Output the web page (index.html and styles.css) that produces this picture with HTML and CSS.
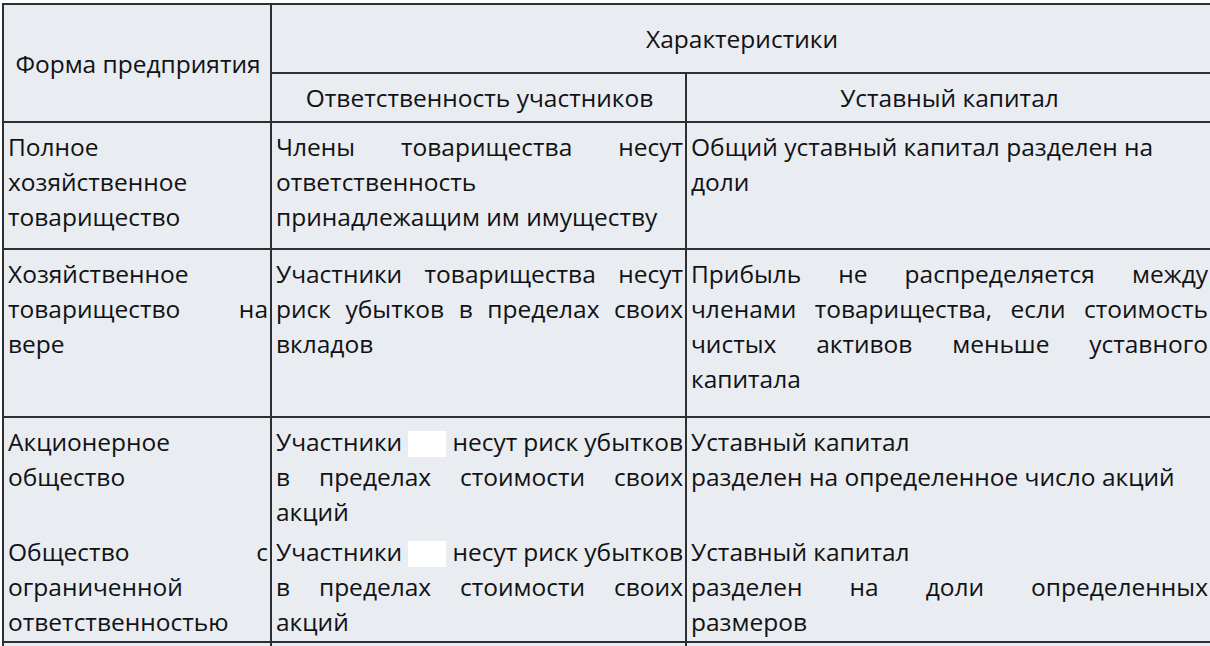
FILE: index.html
```html
<!DOCTYPE html>
<html lang="ru">
<head>
<meta charset="utf-8">
<title>Формы предприятий</title>
<link rel="stylesheet" href="styles.css">
</head>
<body>
<table class="grid">
  <colgroup>
    <col class="col-form">
    <col class="col-resp">
    <col class="col-cap">
  </colgroup>
  <thead>
    <tr class="h-top">
      <th rowspan="2" class="head-form">Форма предприятия</th>
      <th colspan="2" class="head">Характеристики</th>
    </tr>
    <tr class="h-sub">
      <th class="head">Ответственность участников</th>
      <th class="head">Уставный капитал</th>
    </tr>
  </thead>
  <tbody>
    <tr class="r1">
      <td><span class="ln">Полное</span><span class="ln">хозяйственное</span><span class="ln">товарищество</span></td>
      <td><span class="ln j">Члены товарищества несут</span><span class="ln">ответственность</span><span class="ln">принадлежащим им имуществу</span></td>
      <td><span class="ln">Общий уставный капитал разделен на</span><span class="ln">доли</span></td>
    </tr>
    <tr class="r2">
      <td><span class="ln">Хозяйственное</span><span class="ln j">товарищество на</span><span class="ln">вере</span></td>
      <td><span class="ln j">Участники товарищества несут</span><span class="ln j">риск убытков в пределах своих</span><span class="ln">вкладов</span></td>
      <td><span class="ln j">Прибыль не распределяется между</span><span class="ln j">членами товарищества, если стоимость</span><span class="ln j">чистых активов меньше уставного</span><span class="ln">капитала</span></td>
    </tr>
    <tr class="r3">
      <td><span class="ln">Акционерное</span><span class="ln">общество</span></td>
      <td><span class="ln j tight">Участники <span class="blank"></span> несут риск убытков</span><span class="ln j">в пределах стоимости своих</span><span class="ln">акций</span></td>
      <td><span class="ln">Уставный капитал</span><span class="ln">разделен на определенное число акций</span></td>
    </tr>
    <tr class="r4">
      <td><span class="ln j">Общество с</span><span class="ln">ограниченной</span><span class="ln">ответственностью</span></td>
      <td><span class="ln j tight">Участники <span class="blank"></span> несут риск убытков</span><span class="ln j">в пределах стоимости своих</span><span class="ln">акций</span></td>
      <td><span class="ln">Уставный капитал</span><span class="ln j">разделен на доли определенных</span><span class="ln">размеров</span></td>
    </tr>
    <tr class="r5">
      <td></td><td></td><td></td>
    </tr>
  </tbody>
</table>
</body>
</html>
```
FILE: styles.css
```css
html, body {
  margin: 0;
  padding: 0;
  background: #ffffff;
  overflow: hidden;
}

.grid {
  margin: 3px 0 0 2px;
  width: 1210px;
  table-layout: fixed;
  border-collapse: separate;
  border-spacing: 0;
  border-top: 2px solid #2e2f33;
  border-left: 2px solid #2e2f33;
  background: #e9ecf1;
  font-family: "Open Sans", "Noto Sans", sans-serif;
  font-size: 24.5px;
  line-height: 35px;
  color: #111214;
}

.col-form { width: 268px; }
.col-resp { width: 415px; }
.col-cap { width: 525px; }

.grid th,
.grid td {
  border-right: 2px solid #2e2f33;
  border-bottom: 2px solid #2e2f33;
  padding: 0 2px 0 4px;
  font-weight: normal;
}

.grid th {
  text-align: center;
  vertical-align: middle;
}

.head-form {
  padding-top: 6px;
}

.h-top { height: 69px; }
.h-sub { height: 49px; }
.r1 { height: 127px; }
.r2 { height: 168px; }
.r3 { height: 113px; }
.r4 { height: 112px; }
.r5 { height: 30px; }

.grid td {
  vertical-align: top;
  text-align: left;
  padding-top: 6px;
}

.r3 td {
  border-bottom: 0;
}

.r4 td {
  padding-top: 3px;
}

.ln {
  display: block;
  white-space: nowrap;
}

.ln.j {
  text-align: justify;
  text-align-last: justify;
}

.ln.tight {
  word-spacing: -4px;
}

.blank {
  display: inline-block;
  width: 38px;
  height: 26px;
  vertical-align: -6px;
  background: #ffffff;
}
```
